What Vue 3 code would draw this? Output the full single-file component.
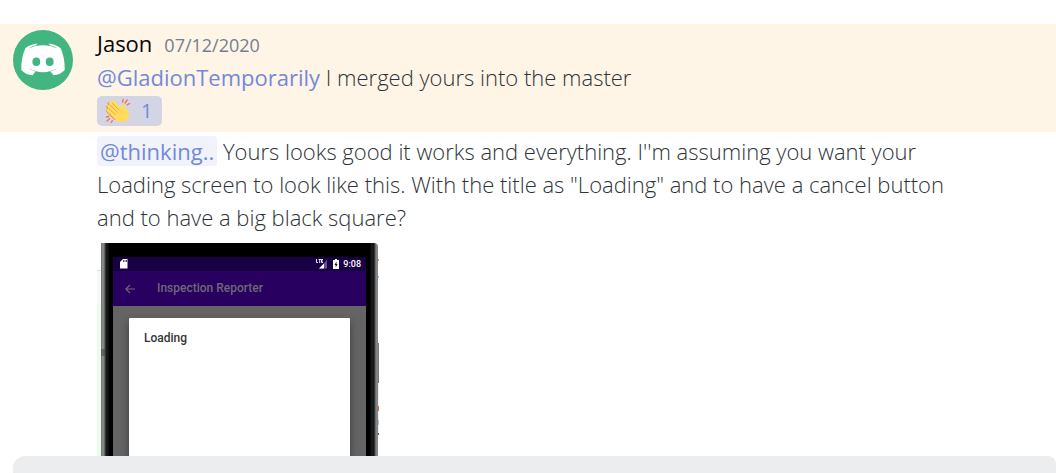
<script setup>
const messages = [
  { id: 1, mention: '@GladionTemporarily', lines: ['I merged yours into the master'] },
  {
    id: 2,
    mention: '@thinking..',
    lines: [
      "Yours looks good it works and everything. I''m assuming you want your",
      'Loading screen to look like this. With the title as "Loading" and to have a cancel button',
      'and to have a big black square?',
    ],
  },
]
</script>

<template>
  <main class="chat">
    <section class="feed">
      <article class="message highlighted">
        <svg class="avatar" viewBox="0 0 60 60" aria-label="Avatar">
          <circle cx="30" cy="30" r="30" fill="#43b581" />
          <path
            fill="#fff"
            d="M12.500 18C16 15.600 20 14 24.500 13.500L23 15.200C19.500 16 17 17.300 15.500 18.500C20 16.400 25 15.200 30 15.200S40 16.400 44.500 18.500C43 17.300 40.500 16 37 15.200L35.500 13.500C40 14 44 15.600 47.500 18C50.500 24.500 52 32 51.700 40C49 43 45 45 40.500 45.300L37.500 41.500C40.500 40.600 42.500 39.500 44 38.200C35 43.500 25 43.500 16 38.200C17.500 39.500 19.500 40.600 22.500 41.500L19.500 45.300C15 45 11 43 8.300 40C8 32 9.500 24.500 12.500 18Z"
          />
          <ellipse cx="23.300" cy="31.700" rx="3.900" ry="4.300" fill="#43b581" />
          <ellipse cx="36.700" cy="31.700" rx="3.900" ry="4.300" fill="#43b581" />
        </svg>
        <div class="body">
          <header class="byline">
            <span class="author">Jason</span>
            <time class="date" datetime="2020-07-12">07/12/2020</time>
          </header>
          <p class="text">
            <a class="mention" href="#">{{ messages[0].mention }}</a> {{ messages[0].lines[0] }}
          </p>
          <button class="reaction" type="button">
            <svg class="clap" viewBox="0 0 26 26" aria-hidden="true">
              <path
                fill="none"
                stroke="#ef9645"
                stroke-width="3"
                stroke-linecap="round"
                d="M2.500 13L10 20.500M2.500 9L10 16.500M4 5.500L11 12"
              />
              <path
                fill="none"
                stroke="#ffdc5d"
                stroke-width="3.200"
                stroke-linecap="round"
                d="M3.500 12.500L11 19.500M4 8.700L12 16.500M5.500 5.500L14 14M8.500 4L16 12"
              />
              <path
                fill="#ffdc5d"
                d="M14 9.500L16 11C16.300 9 16 7.500 17.300 6.500C18.700 5.700 19.800 7 20.200 8.500L23 13C25 17 24 20.500 21 22.700C18 25 13.500 24.500 10.500 21.500L7.500 18Z"
              />
              <path
                fill="none"
                stroke="#ef9645"
                stroke-width=".8"
                stroke-linecap="round"
                d="M4 10.700L10.500 16.800M5 7L12 13.700M7.200 5L14 11.700"
              />
              <path
                fill="none"
                stroke="#f4734b"
                stroke-width="1.300"
                stroke-linecap="round"
                d="M17.500 4L18.200 1.500M20 5L22.200 2M22 7L24.500 5.500M1.500 19L3.700 18.500M2 23L4.500 20.700M6.300 24.500L7.300 22.500"
              />
            </svg>
            <span>1</span>
          </button>
        </div>
      </article>

      <article class="message">
        <div class="body">
          <p class="text">
            <a class="mention boxed" href="#">{{ messages[1].mention }}</a>&#32;<template v-for="(line, i) in messages[1].lines" :key="i"><br v-if="i" />{{ i ? line : ' ' + line }}</template>
          </p>
          <figure class="attachment">
            <div class="backdrop left"></div>
            <div class="rail left-rail"></div>
            <div class="screen">
              <div class="status">
                <svg class="sd" viewBox="0 0 8 10" aria-hidden="true">
                  <path fill="#fff" d="M3 0H7.500V9.500H0V3Z" />
                  <path stroke="#190045" stroke-width=".7" d="M3.500 1V3M5 1V3M6.500 1V3" />
                </svg>
                <svg class="signal" viewBox="0 0 12 10" aria-hidden="true">
                  <path fill="#65558a" d="M11 1V9.500H3Z" />
                  <path fill="#fff" d="M8 4.500V9.500H3Z" />
                  <path fill="none" stroke="#fff" stroke-width=".9" d="M.5 0V3.500H2M2.500 .5H5M3.700 .5V4M7 .5H5.500V3.500H7M5.500 2H7" />
                </svg>
                <svg class="battery" viewBox="0 0 6 10" aria-hidden="true">
                  <path fill="#fff" d="M2 0H4V1H6V10H0V1H2Z" />
                  <path fill="#190045" d="M3.500 2.500L1.500 6H2.700V8.500L4.600 5H3.500Z" />
                </svg>
                <span class="clock">9:08</span>
              </div>
              <div class="appbar">
                <svg class="back" viewBox="0 0 10 10" aria-hidden="true">
                  <path fill="none" stroke="#6f687a" stroke-width="1.200" d="M10 5H1M5 .8L.8 5L5 9.200" />
                </svg>
                <span>Inspection Reporter</span>
              </div>
              <div class="dimmed">
                <div class="dialog">Loading</div>
              </div>
            </div>
            <div class="rail right-rail"></div>
            <div class="backdrop right"></div>
          </figure>
        </div>
      </article>
    </section>
    <input class="composer" type="text" aria-label="Message" />
  </main>
</template>

<style>
body {
  margin: 0;
  background: #fff;
}
</style>

<style scoped>
.chat {
  display: flex;
  flex-direction: column;
  height: 100vh;
  overflow: hidden;
  color: #2e3338;
  font-family: "Open Sans", "Noto Sans", sans-serif;
  font-size: 22px;
  line-height: 33px;
}
.feed {
  display: flex;
  flex: 1;
  flex-direction: column;
  min-height: 0;
  padding-top: 24px;
  overflow: hidden;
}
.message {
  display: flex;
  flex: none;
  padding: 3px 16px 0 97px;
}
.message:last-child {
  flex: 1;
  min-height: 0;
}
.highlighted {
  gap: 24px;
  padding: 3px 16px 6px 13px;
  background: #fef5e7;
}
.avatar {
  flex: none;
  width: 60px;
  height: 60px;
  margin-top: 3px;
}
.body {
  display: flex;
  flex: 1;
  flex-direction: column;
  min-width: 0;
}
.byline {
  display: flex;
  gap: 12px;
  align-items: baseline;
  line-height: 32px;
}
.author {
  color: #060607;
}
.date {
  color: #747f8d;
  font-size: 18px;
}
.text {
  margin: 0;
  font-weight: 300;
  white-space: nowrap;
}
.mention {
  color: #7289da;
  font-weight: 500;
  text-decoration: none;
}
.boxed {
  padding: 0 3px;
  border-radius: 4px;
  background: #f1f3fb;
}
.reaction {
  display: flex;
  gap: 10px;
  align-items: center;
  align-self: flex-start;
  height: 30px;
  margin-top: 2px;
  padding: 0 10px 0 8px;
  border: 0;
  border-radius: 5px;
  background: #d4d5e4;
  color: #7289da;
  font: 20px/30px "Open Sans", "Noto Sans", sans-serif;
}
.clap {
  width: 26px;
  height: 26px;
}
.attachment {
  display: flex;
  flex: 1;
  width: 282px;
  min-height: 0;
  margin: 9px 0 0;
  background: #fff;
}
.backdrop.left {
  width: 4px;
  background: linear-gradient(#fff 27px, #ddd 27px 28px, #f8f8f8 28px 60px, #eafcec 60px);
}
.backdrop.right {
  width: 1px;
  background: linear-gradient(#fff 16px, #d99a65 16px 18px, #fff 18px 33px, #9cc4dd 33px 35px, #fff 35px 100px, #777 100px 140px, #eee 140px 163px, #bd7442 163px 168px, #eee 168px 177px, #90c6e8 177px 182px, #eee 182px 190px, #555 190px 192px, #fff 192px);
}
.rail {
  width: 12px;
}
.left-rail {
  background:
    linear-gradient(transparent 106px, #4448 106px 113px, transparent 113px) 0 0 / 4px 100% no-repeat,
    linear-gradient(90deg, #6d6d6d, #929292 2px, #555 4px, #111518 5px, #15191b 7px, #000 8px);
}
.right-rail {
  border-radius: 0 4px 0 0;
  background: linear-gradient(90deg, #000 4px, #15191b 5px 7px, #111 8px, #5a5a5a 9px, #929292 11px, #777);
}
.screen {
  display: flex;
  flex: 1;
  flex-direction: column;
  border-top: 14px solid #000;
  background: #646464;
  font-family: Roboto, sans-serif;
}
.status {
  display: flex;
  flex: none;
  align-items: center;
  height: 14px;
  padding: 0 5px 0 7px;
  background: #190045;
  color: #fff;
  font-size: 9px;
  font-weight: 500;
  line-height: 14px;
}
.sd {
  width: 8px;
  height: 10px;
}
.signal {
  width: 12px;
  height: 10px;
  margin-left: auto;
}
.battery {
  width: 6px;
  height: 10px;
  margin: 0 4px 0 5px;
}
.appbar {
  display: flex;
  flex: none;
  gap: 22px;
  align-items: center;
  height: 35px;
  padding-left: 12px;
  background: #28005f;
  color: #6f687a;
  font-size: 12px;
  font-weight: 500;
}
.back {
  width: 10px;
  height: 10px;
}
.dimmed {
  display: flex;
  flex: 1;
  padding: 12px 16px 0;
  overflow: hidden;
}
.dialog {
  flex: 1;
  padding: 4px 15px;
  border-radius: 1px 1px 0 0;
  background: #fff;
  box-shadow: 0 4px 8px #0006;
  color: #333;
  font-size: 12px;
  font-weight: 500;
}
.composer {
  flex: none;
  box-sizing: border-box;
  height: 17px;
  margin: 0 0 0 13px;
  padding: 0 16px;
  border: 0;
  border-radius: 12px 8px 0 0;
  outline: 0;
  background: #ebedef;
  font: inherit;
}
</style>
